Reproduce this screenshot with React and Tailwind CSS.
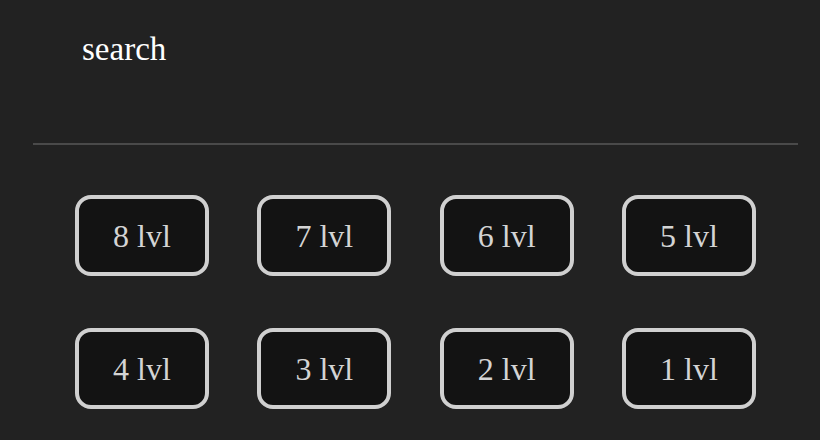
export default function App() {
  const rows = [
    [8, 7, 6, 5],
    [4, 3, 2, 1],
  ];
  return (
    <div className="w-[820px] h-[440px] bg-[#222222] overflow-hidden" style={{ fontFamily: '"Liberation Serif", serif' }}>
      <div className="h-[143px] pl-[82px] pt-[33px]">
        <div className="text-white text-[33px] leading-none">search</div>
      </div>
      <div className="ml-[33px] w-[765px] h-[2px] bg-[#4a4a4a]" />
      <div className="w-[681px] ml-[75px] mt-[50px] flex flex-col gap-[52px]">
        {rows.map((row, i) => (
          <div key={i} className="flex justify-between">
            {row.map((l) => (
              <div
                key={l}
                className="w-[134px] h-[81px] border-4 border-[#d0d0d0] rounded-[16px] bg-[#131313] flex items-center justify-center text-[#d4d4d4] text-[32px]"
              >
                {l} lvl
              </div>
            ))}
          </div>
        ))}
      </div>
    </div>
  );
}
